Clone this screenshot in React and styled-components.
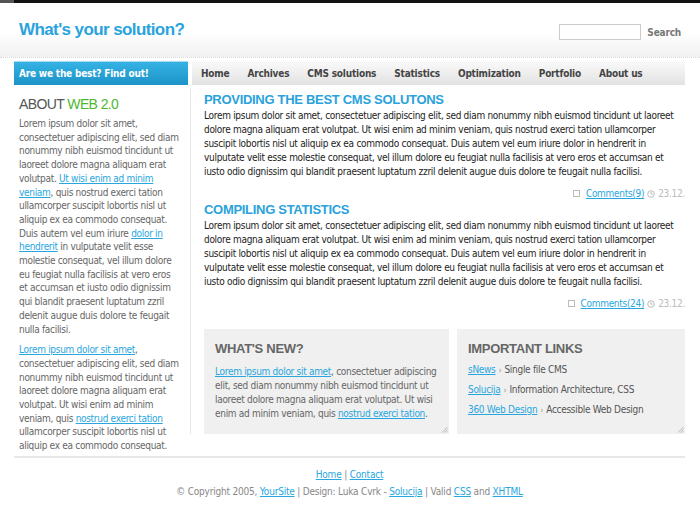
import React from 'react';
import styled, { createGlobalStyle } from 'styled-components';

const GlobalStyle = createGlobalStyle`
  body {
    margin: 0;
    background: #fff;
    font-family: "DejaVu Sans", sans-serif;
    font-stretch: condensed;
    font-size: 10px;
    letter-spacing: -0.3px;
    color: #333;
  }
  a {
    color: #29a6de;
  }
`;

const Page = styled.div`
  width: 700px;
  overflow: hidden;
`;

const TopStrip = styled.div`
  height: 3px;
  background: linear-gradient(90deg, #555 0, #555 14px, #111 14px);
`;

const Header = styled.header`
  height: 50px;
  padding: 4px 19px 0;
  display: flex;
  align-items: center;
  justify-content: space-between;
  background: linear-gradient(#fff 0%, #fff 55%, #f1f1f1 100%);
  border-bottom: 1px dotted #d8d8d8;
`;

const Title = styled.h1`
  margin: 0 0 4px;
  font-family: "Liberation Sans", Arial, sans-serif;
  font-stretch: normal;
  font-size: 17px;
  letter-spacing: -0.6px;
  color: #29a3dd;
`;

const SearchForm = styled.form`
  display: flex;
  align-items: center;
  gap: 6px;
  margin: 0;
`;

const SearchInput = styled.input`
  width: 76px;
  height: 12px;
  border: 1px solid #ccc;
  padding: 1px 2px;
`;

const SearchLabel = styled.span`
  font-weight: bold;
  letter-spacing: -0.2px;
  color: #777;
`;

const NavRow = styled.div`
  display: flex;
  gap: 4px;
  margin: 3px 15px 0 14px;
  height: 24px;
`;

const Promo = styled.a`
  width: 169px;
  flex: none;
  display: flex;
  align-items: center;
  padding-left: 5px;
  color: #fff;
  font-weight: bold;
  letter-spacing: -0.2px;
  text-decoration: none;
  white-space: nowrap;
  background: linear-gradient(#35b2e3, #1c93c9);
  border-top: 1px solid #a6dcf2;
`;

const Nav = styled.nav`
  flex: 1;
  display: flex;
  align-items: center;
  gap: 18px;
  padding-left: 9px;
  background: linear-gradient(#fafafa, #e2e2e2);
`;

const NavLink = styled.a`
  color: #444;
  font-weight: bold;
  letter-spacing: -0.2px;
  text-decoration: none;
  white-space: nowrap;
`;

const Body = styled.div`
  display: flex;
  align-items: flex-start;
  margin: 3px 15px 0 14px;
`;

const Sidebar = styled.aside`
  width: 162px;
  flex: none;
  padding: 8px 9px 0 5px;
  color: #666;
  line-height: 13.7px;

  p {
    margin: 0 0 7px;
  }

  p:last-child {
    margin-bottom: 0;
  }
`;

const SideTitle = styled.h2`
  margin: 0 0 5px;
  font-family: "Liberation Sans", Arial, sans-serif;
  font-stretch: normal;
  font-size: 14px;
  font-weight: normal;
  letter-spacing: -0.6px;
  color: #555;
  line-height: 16px;

  span {
    color: #4cb82c;
  }
`;

const Main = styled.main`
  flex: 1;
  padding: 4px 0 0 13px;
  border-left: 1px solid #e6e6e6;
`;

const Post = styled.article`
  margin-bottom: 2px;
`;

const PostTitle = styled.h2`
  margin: 0 0 1px;
  font-family: "Liberation Sans", Arial, sans-serif;
  font-stretch: normal;
  font-size: 13px;
  letter-spacing: -0.3px;
  color: #2aa2dc;
  line-height: 16px;
`;

const PostText = styled.p`
  margin: 0;
  line-height: 14px;
  color: #222;
`;

const Meta = styled.div`
  display: flex;
  justify-content: flex-end;
  align-items: center;
  gap: 3px;
  margin-top: 8px;
  color: #bbb;
  line-height: 13px;

  svg {
    flex: none;
  }

  a {
    margin-left: 3px;
  }
`;

const Boxes = styled.div`
  display: flex;
  gap: 8px;
  margin-top: 19px;
`;

const Box = styled.section`
  position: relative;
  width: ${({ $w }) => $w}px;
  flex: none;
  height: 105px;
  box-sizing: border-box;
  padding: 12px 11px 0;
  background: #f0f0f0;
  color: #666;
  line-height: 14px;
`;

const BoxTitle = styled.h3`
  margin: 0 0 8px;
  font-family: "Liberation Sans", Arial, sans-serif;
  font-stretch: normal;
  font-size: 13px;
  letter-spacing: -0.3px;
  color: #666;
  line-height: 16px;
`;

const LinkList = styled.ul`
  list-style: none;
  margin: 0;
  padding: 0;

  li {
    line-height: 20px;
    margin-top: -5px;
    margin-bottom: 5px;
  }

  b {
    font-weight: normal;
    color: #999;
    font-size: 9px;
    margin: 0 3px;
  }

  span {
    color: #555;
  }
`;

const Grip = styled.svg`
  position: absolute;
  right: 1px;
  bottom: 1px;
`;

const Footer = styled.footer`
  margin: 3px 15px 0 14px;
  padding-top: 8px;
  border-top: 2px solid #e8e8e8;
  text-align: center;
  color: #888;
  letter-spacing: -0.2px;
  line-height: 17px;

  p {
    margin: 0;
  }
`;

const Sep = styled.span`
  color: #888;
`;

const PageIcon = () => (
  <svg width="7" height="7" viewBox="0 0 7 7">
    <rect x="0.5" y="0.5" width="6" height="6" fill="none" stroke="#bbb" />
  </svg>
);

const ClockIcon = () => (
  <svg width="8" height="8" viewBox="0 0 8 8">
    <circle cx="4" cy="4" r="3.3" fill="none" stroke="#bbb" strokeWidth="1" />
    <path d="M4 2v2.2h1.6" fill="none" stroke="#bbb" strokeWidth="1" />
  </svg>
);

const ResizeGrip = () => (
  <Grip width="7" height="7" viewBox="0 0 7 7">
    <path d="M6.5 1L1 6.5M6.5 3.5L3.5 6.5M6.5 5.5L5.5 6.5" stroke="#aaa" strokeWidth="0.8" />
  </Grip>
);

const lorem =
  'Lorem ipsum dolor sit amet, consectetuer adipiscing elit, sed diam nonummy nibh euismod tincidunt ut laoreet dolore magna aliquam erat volutpat. Ut wisi enim ad minim veniam, quis nostrud exerci tation ullamcorper suscipit lobortis nisl ut aliquip ex ea commodo consequat. Duis autem vel eum iriure dolor in hendrerit in vulputate velit esse molestie consequat, vel illum dolore eu feugiat nulla facilisis at vero eros et accumsan et iusto odio dignissim qui blandit praesent luptatum zzril delenit augue duis dolore te feugait nulla facilisi.';

const posts = [
  { title: 'PROVIDING THE BEST CMS SOLUTONS', comments: 9 },
  { title: 'COMPILING STATISTICS', comments: 24 },
];

const navItems = ['Home', 'Archives', 'CMS solutions', 'Statistics', 'Optimization', 'Portfolio', 'About us'];

const links = [
  ['sNews', 'Single file CMS'],
  ['Solucija', 'Information Architecture, CSS'],
  ['360 Web Design', 'Accessible Web Design'],
];

const App = () => (
  <Page>
    <GlobalStyle />
    <TopStrip />
    <Header>
      <Title>What's your solution?</Title>
      <SearchForm onSubmit={e => e.preventDefault()}>
        <SearchInput type="text" />
        <SearchLabel>Search</SearchLabel>
      </SearchForm>
    </Header>

    <NavRow>
      <Promo href="#">Are we the best? Find out!</Promo>
      <Nav>
        {navItems.map(item => (
          <NavLink key={item} href="#">{item}</NavLink>
        ))}
      </Nav>
    </NavRow>

    <Body>
      <Sidebar>
        <SideTitle>ABOUT <span>WEB 2.0</span></SideTitle>
        <p>
          Lorem ipsum dolor sit amet, consectetuer adipiscing elit, sed diam nonummy nibh euismod tincidunt ut laoreet dolore magna aliquam erat volutpat. <a href="#">Ut wisi enim ad minim veniam</a>, quis nostrud exerci tation ullamcorper suscipit lobortis nisl ut aliquip ex ea commodo consequat. Duis autem vel eum iriure <a href="#">dolor in hendrerit</a> in vulputate velit esse molestie consequat, vel illum dolore eu feugiat nulla facilisis at vero eros et accumsan et iusto odio dignissim qui blandit praesent luptatum zzril delenit augue duis dolore te feugait nulla facilisi.
        </p>
        <p>
          <a href="#">Lorem ipsum dolor sit amet</a>, consectetuer adipiscing elit, sed diam nonummy nibh euismod tincidunt ut laoreet dolore magna aliquam erat volutpat. Ut wisi enim ad minim veniam, quis <a href="#">nostrud exerci tation</a> ullamcorper suscipit lobortis nisl ut aliquip ex ea commodo consequat.
        </p>
      </Sidebar>

      <Main>
        {posts.map(post => (
          <Post key={post.title}>
            <PostTitle>{post.title}</PostTitle>
            <PostText>{lorem}</PostText>
            <Meta>
              <PageIcon />
              <a href="#">Comments({post.comments})</a>
              <ClockIcon />
              <span>23.12.</span>
            </Meta>
          </Post>
        ))}

        <Boxes>
          <Box $w={245}>
            <BoxTitle>WHAT'S NEW?</BoxTitle>
            <a href="#">Lorem ipsum dolor sit amet</a>, consectetuer adipiscing elit, sed diam nonummy nibh euismod tincidunt ut laoreet dolore magna aliquam erat volutpat. Ut wisi enim ad minim veniam, quis <a href="#">nostrud exerci tation</a>.
            <ResizeGrip />
          </Box>
          <Box $w={228}>
            <BoxTitle>IMPORTANT LINKS</BoxTitle>
            <LinkList>
              {links.map(([name, desc]) => (
                <li key={name}>
                  <a href="#">{name}</a><b>›</b><span>{desc}</span>
                </li>
              ))}
            </LinkList>
            <ResizeGrip />
          </Box>
        </Boxes>
      </Main>
    </Body>

    <Footer>
      <p><a href="#">Home</a> <Sep>|</Sep> <a href="#">Contact</a></p>
      <p>
        © Copyright 2005, <a href="#">YourSite</a> | Design: Luka Cvrk - <a href="#">Solucija</a> | Valid <a href="#">CSS</a> and <a href="#">XHTML</a>
      </p>
    </Footer>
  </Page>
);

export default App;
